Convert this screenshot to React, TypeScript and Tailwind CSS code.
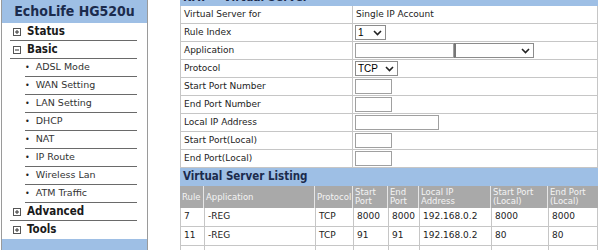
const menu: { label: string; kind: 'top' | 'sub'; open?: boolean }[] = [
  { label: 'Status', kind: 'top' },
  { label: 'Basic', kind: 'top', open: true },
  { label: 'ADSL Mode', kind: 'sub' },
  { label: 'WAN Setting', kind: 'sub' },
  { label: 'LAN Setting', kind: 'sub' },
  { label: 'DHCP', kind: 'sub' },
  { label: 'NAT', kind: 'sub' },
  { label: 'IP Route', kind: 'sub' },
  { label: 'Wireless Lan', kind: 'sub' },
  { label: 'ATM Traffic', kind: 'sub' },
  { label: 'Advanced', kind: 'top' },
  { label: 'Tools', kind: 'top' },
];

const cols = [
  { w: 'w-[23px]', head: ['Rule'] },
  { w: 'w-[111px]', head: ['Application'] },
  { w: 'w-[38px]', head: ['Protocol'] },
  { w: 'w-[35px]', head: ['Start', 'Port'] },
  { w: 'w-[31px]', head: ['End', 'Port'] },
  { w: 'w-[72px]', head: ['Local IP', 'Address'] },
  { w: 'w-[57px]', head: ['Start Port', '(Local)'] },
  { w: 'flex-1', head: ['End Port', '(Local)'] },
];

const rows = [
  ['7', '-REG', 'TCP', '8000', '8000', '192.168.0.2', '8000', '8000'],
  ['11', '-REG', 'TCP', '91', '91', '192.168.0.2', '80', '80'],
  ['', '', '', '', '', '', '', ''],
];

function ToggleBox({ open }: { open?: boolean }) {
  return (
    <svg width="8" height="8" viewBox="0 0 8 8" className="shrink-0">
      <rect x="0.5" y="0.5" width="7" height="7" fill="white" stroke="#555" />
      <path d="M2 4h4" stroke="#333" />
      {!open && <path d="M4 2v4" stroke="#333" />}
    </svg>
  );
}

function Chevron() {
  return (
    <svg width="9" height="6" viewBox="0 0 9 6" className="shrink-0">
      <path d="M1 1l3.5 3.5L8 1" fill="none" stroke="#222" strokeWidth="1.6" />
    </svg>
  );
}

function Select({ w, value }: { w: string; value: string }) {
  return (
    <div className={`${w} h-[15px] border border-[#8c8c8c] bg-white flex items-center justify-between pl-[2px] pr-[3px] text-[10px] text-black font-['Liberation_Sans',sans-serif]`}>
      <span>{value}</span>
      <Chevron />
    </div>
  );
}

function Input({ w }: { w: string }) {
  return <div className={`${w} h-[15px] border border-[#a0a0a0] bg-white`} />;
}

function FormRow({ label, children }: { label: string; children?: React.ReactNode }) {
  return (
    <div className="flex h-[18px] border-b border-[#c6c6c6]">
      <div className="w-[172px] border-r border-[#c6c6c6] pl-[3px] flex items-center">{label}</div>
      <div className="flex-1 pl-[2px] flex items-center">{children}</div>
    </div>
  );
}

export default function App() {
  return (
    <div className="w-[600px] h-[250px] overflow-hidden bg-white flex font-['DejaVu_Sans',Verdana,sans-serif] text-[9px] text-[#222]">
      {/* Sidebar */}
      <div className="ml-px w-[147px] h-[250px] border-x border-[#9a9a9a] flex flex-col">
        <div className="h-[23px] shrink-0 bg-[#9ebfe5] flex items-center justify-center font-['DejaVu_Sans_Condensed','DejaVu_Sans',sans-serif] font-bold text-[14px] text-[#1b2b4d]">
          EchoLife HG520u
        </div>
        {menu.map((m, i) => {
          const last = i === menu.length - 1;
          return m.kind === 'top' ? (
            <div
              key={m.label}
              className={`ml-[8px] mr-[10px] h-[18px] shrink-0 flex items-center ${last ? '' : 'border-b border-[#6a6a6a]'}`}
            >
              <span className="ml-[3px]"><ToggleBox open={m.open} /></span>
              <span className="ml-[6px] font-['DejaVu_Sans_Condensed','DejaVu_Sans',sans-serif] font-bold text-[11.5px] text-[#1a1a1a]">{m.label}</span>
            </div>
          ) : (
            <div key={m.label} className="ml-[23px] mr-[10px] h-[18px] shrink-0 flex items-center border-b border-[#6a6a6a]">
              <span className="text-[8px]">•</span>
              <span className="ml-[6px] text-[9.5px] text-[#333]">{m.label}</span>
            </div>
          );
        })}
        <div className="flex-1 bg-[#9ebfe5]" />
      </div>

      {/* Main */}
      <div className="ml-[32px] w-[418px] -mt-[13px] flex flex-col">
        <div className="h-[19px] shrink-0 bg-[#9ebfe5] pl-[3px] flex items-center font-['DejaVu_Sans_Condensed','DejaVu_Sans',sans-serif] font-bold text-[12px] text-[#1b2b4d]">
          NAT -- Virtual Server
        </div>
        <div className="border-x border-[#c6c6c6]">
          <FormRow label="Virtual Server for">
            <span className="ml-[1px]">Single IP Account</span>
          </FormRow>
          <FormRow label="Rule Index">
            <Select w="w-[31px]" value="1" />
          </FormRow>
          <FormRow label="Application">
            <Input w="w-[99px]" />
            <div className="w-[80px] h-[15px] border border-[#8c8c8c] border-l-2 border-l-[#777] bg-white flex items-center justify-end pr-[3px]">
              <Chevron />
            </div>
          </FormRow>
          <FormRow label="Protocol">
            <Select w="w-[43px]" value="TCP" />
          </FormRow>
          <FormRow label="Start Port Number">
            <Input w="w-[37px]" />
          </FormRow>
          <FormRow label="End Port Number">
            <Input w="w-[37px]" />
          </FormRow>
          <FormRow label="Local IP Address">
            <Input w="w-[84px]" />
          </FormRow>
          <FormRow label="Start Port(Local)">
            <Input w="w-[37px]" />
          </FormRow>
          <FormRow label="End Port(Local)">
            <Input w="w-[37px]" />
          </FormRow>
        </div>

        <div className="h-[18px] shrink-0 bg-[#9ebfe5] pl-[3px] flex items-center font-['DejaVu_Sans_Condensed','DejaVu_Sans',sans-serif] font-bold text-[11.5px] text-[#1b2b4d]">
          Virtual Server Listing
        </div>
        <div className="flex h-[22px] shrink-0 bg-[#a9a9a9] text-[#f4f4f4] text-[8.5px] leading-[9px]">
          {cols.map((c, i) => (
            <div
              key={i}
              className={`${c.w} shrink-0 overflow-hidden whitespace-nowrap flex flex-col justify-center pl-[2px] ${i > 0 ? 'border-l border-[#e6e6e6]' : ''}`}
            >
              {c.head.map((h) => (
                <span key={h}>{h}</span>
              ))}
            </div>
          ))}
        </div>
        <div className="border-x border-[#c6c6c6]">
          {rows.map((r, ri) => (
            <div key={ri} className="flex h-[19px] border-b border-[#c6c6c6]">
              {r.map((v, ci) => (
                <div
                  key={ci}
                  className={`${cols[ci].w} shrink-0 pl-[3px] flex items-center ${ci > 0 ? 'border-l border-[#c6c6c6]' : ''}`}
                >
                  {v}
                </div>
              ))}
            </div>
          ))}
        </div>
      </div>
    </div>
  );
}
